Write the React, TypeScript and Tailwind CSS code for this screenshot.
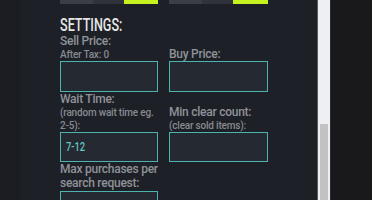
import React from 'react'

const font = { fontFamily: 'Roboto, "Liberation Sans", sans-serif' }

function Label({ children, className = '' }: { children: React.ReactNode; className?: string }) {
  return (
    <div className={`text-[12px] leading-[14px] font-medium tracking-[-0.25px] text-[#8f9298] ${className}`}>
      {children}
    </div>
  )
}

function Hint({ children }: { children: React.ReactNode }) {
  return (
    <div className="text-[10px] leading-[13px] font-medium tracking-[-0.2px] text-[#878a90]">
      {children}
    </div>
  )
}

function Field({ value, h = 'h-[31px]' }: { value?: string; h?: string }) {
  return (
    <div className={`flex ${h} w-full items-center border border-[#4cb3ae] bg-[#252a32] px-[5px]`}>
      {value && (
        <span className="inline-block origin-left scale-x-[0.72] text-[13px] font-medium text-[#62c6c1]">
          {value}
        </span>
      )}
    </div>
  )
}

function Toggle() {
  return (
    <div className="flex h-[4px] w-full">
      <div className="w-[33px] bg-[#3b3e46]" />
      <div className="w-[31px] bg-[#30333a]" />
      <div className="flex-1 bg-[#c6f320]" />
    </div>
  )
}

export default function App() {
  return (
    <div className="flex h-[200px] w-[372px] overflow-hidden bg-[#19191b]" style={font}>
      <div className="flex h-full w-[317px] bg-[#1d2027]">
        <div className="h-full w-[20px] bg-[#1b1d23]" />
        <div className="flex flex-col pl-[40px]">
          <div className="grid grid-cols-[98px_99px] gap-x-[11px]">
            <Toggle />
            <Toggle />
          </div>

          <h2 className="mt-[13px] h-[18px] text-[17.5px] leading-[17px] font-medium text-[#e6e6e6]">
            <span className="inline-block origin-left scale-x-[0.72] scale-y-[1.05]">SETTINGS:</span>
          </h2>

          <div className="grid grid-cols-[98px_99px] items-end gap-x-[11px]">
            <div className="flex flex-col">
              <Label>Sell Price:</Label>
              <div className="mt-[1px] text-[10px] leading-[12px] font-medium tracking-[-0.2px] text-[#878a90]">
                After Tax: 0
              </div>
              <Field />
            </div>
            <div className="flex flex-col">
              <Label>Buy Price:</Label>
              <Field />
            </div>

            <div className="flex flex-col">
              <Label>Wait Time:</Label>
              <Hint>(random wait time eg. 2-5):</Hint>
              <Field value="7-12" h="h-[30px]" />
            </div>
            <div className="flex flex-col">
              <Label>Min clear count:</Label>
              <Hint>(clear sold items):</Hint>
              <Field h="h-[30px]" />
            </div>

            <div className="flex flex-col">
              <Label className="leading-[13px]">Max purchases per search request:</Label>
              <div className="mt-[1px]">
                <Field />
              </div>
            </div>
            <div />
          </div>
        </div>
      </div>

      <div className="flex h-full w-[14px] border-l border-r border-l-[#5a5c61] border-r-[#2c2d31] bg-[#eeeff2] px-[2px]">
        <div className="mt-[124px] h-[200px] w-full bg-[#c2c2c3]" />
      </div>
    </div>
  )
}
